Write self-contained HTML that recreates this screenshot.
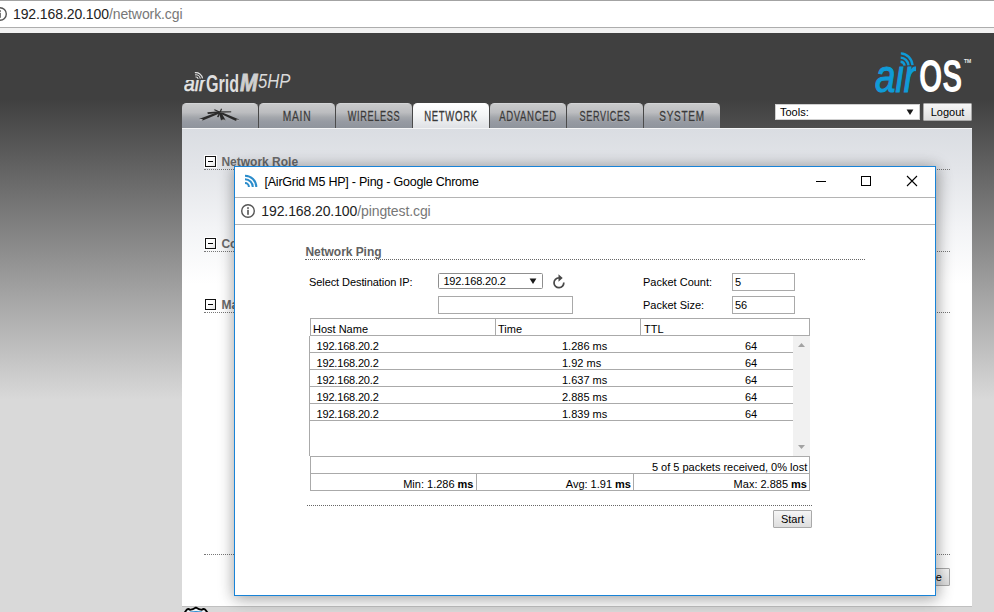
<!DOCTYPE html>
<html><head><meta charset="utf-8"><title>[AirGrid M5 HP] - Network</title>
<style>
*{box-sizing:border-box;margin:0;padding:0}
html,body{width:994px;height:612px;overflow:hidden}
body{position:relative;font-family:"Liberation Sans",Arial,sans-serif;font-size:11px;color:#000;background:#404040}
.abs{position:absolute}
.nw{white-space:nowrap}
#bg{left:0;top:33px;width:994px;height:579px;background:linear-gradient(to bottom,#404040 0px,#404040 67px,#d9d9d9 367px,#d9d9d9 579px)}
#chrome{left:0;top:0;width:994px;height:33px;background:#fff;border-top:1px solid #a3a3a3}
#chrome .ln{left:0;top:26px;width:994px;height:1px;background:#adadad}
#chrome .band{left:0;top:27px;width:994px;height:5px;background:#f2f2f2}
#url{left:13px;top:5px;font-size:14px;line-height:16px;color:#222;letter-spacing:-.1px}
#url span{color:#777}
#panel{left:182px;top:128px;width:790px;height:478px;background:linear-gradient(to bottom,#dadde2 0,#e3e5e9 40px,#f3f4f6 100px,#fff 155px);border-top:1px solid #f4f5f6}
#below{left:0;top:606px;width:994px;height:6px;background:#d9d9d9}
.tab{top:103px;width:76px;height:25px;border-radius:4.5px 4.5px 0 0;background:linear-gradient(to bottom,#c9cacb 0,#bcbdc0 35%,#a4a7ac 55%,#979ba3 72%,#8f949c 100%);border-top:1px solid #d3d4d6;color:#3a3a3a;text-align:center;font-size:13.8px;line-height:25.4px;-webkit-text-stroke:.3px #3a3a3a;text-shadow:0 1px 0 rgba(255,255,255,.3)}
.tab.act{background:linear-gradient(to bottom,#fff 0,#f4f5f6 45%,#dfe1e5 100%);border-color:#fff}
.tab span{position:absolute;left:50%;top:0;white-space:nowrap;transform:translateX(-50%) scaleX(var(--s));transform-origin:50% 50%;letter-spacing:1px;margin-left:.4px}
.sec{left:204px;width:746px;height:15px;border-bottom:1px dotted #777}
.sec i{position:absolute;left:1px;top:1px;width:11px;height:11px;border:1px solid #111;background:linear-gradient(135deg,#fff 40%,#e4e4e4);box-shadow:0 0 0 1px rgba(255,255,255,.9)}
.sec i:after{content:"";position:absolute;left:2px;top:4px;width:5px;height:1px;background:#000}
.sec b{position:absolute;left:17.4px;top:0;font-size:12px;line-height:14px;color:#6a6a6a;white-space:nowrap}
#win{left:234px;top:166px;width:702px;height:430px;background:#fff;border:1px solid #1883d7;box-shadow:0 1px 14px 1px rgba(0,0,0,.28),3px 4px 16px rgba(0,0,0,.13)}
#win .l1{left:0;top:30px;width:700px;height:1px;background:#b4b4b4}
#win .l2{left:0;top:57px;width:700px;height:1px;background:#b4b4b4}
#title{left:29.5px;top:8px;font-size:12.5px;line-height:15px;color:#000;letter-spacing:-.23px}
#wurl{left:26.3px;top:36px;font-size:14px;line-height:16px;color:#222;letter-spacing:-.1px}
#wurl span{color:#777}
.lbl{font-size:11px;line-height:13px;white-space:nowrap}
.inp{background:#fff;border:1px solid #a9a9a9;font-size:11px;line-height:15px;padding-left:2px}
.btn{border:1px solid #a9a9a9;border-radius:1px;background:linear-gradient(to bottom,#f6f6f6,#dedede);font-size:11px;line-height:16px;text-align:center;color:#000}
.hl{background:#aaa;height:1px}
.vl{background:#aaa;width:1px}
.row{left:310px;width:483px;height:17px;border-bottom:1px solid #aaa;font-size:11px;line-height:16px}
.row span{top:2px}
.row .ip{left:6.5px;letter-spacing:-.18px}
.row span{position:absolute;white-space:nowrap}
</style></head><body>
<div id="bg" class="abs"></div>
<div id="chrome" class="abs"><div class="ln abs"></div><div class="band abs"></div>
<div id="url" class="abs nw">192.168.20.100<span>/network.cgi</span></div></div>
<div id="panel" class="abs"></div>
<!-- top-left info icon (cut off) -->
<svg class="abs" style="left:-8px;top:6px" width="16" height="16" viewBox="0 0 16 16"><circle cx="8" cy="8" r="6.3" fill="none" stroke="#555" stroke-width="1.4"/><rect x="7.2" y="6.8" width="1.6" height="5" fill="#555"/><rect x="7.2" y="4.2" width="1.6" height="1.7" fill="#555"/></svg>

<!-- airGrid logo -->
<div class="abs nw" id="lg-air" style="left:183.8px;top:71.4px;font-size:22.5px;line-height:26px;font-style:italic;-webkit-text-stroke:.55px #e6e6e6;color:#e6e6e6;transform-origin:0 0;transform:scaleX(.86);clip-path:inset(8.5px 0 0 0)">air</div>
<svg class="abs" style="left:192px;top:68px" width="14" height="14" viewBox="0 0 14 14"><g fill="none" stroke="#e2e2e2" stroke-width="1.15"><path d="M2.85 4.67A6.8 6.8 0 0 1 10.53 10.45"/><path d="M3.16 6.84A4.6 4.6 0 0 1 8.33 10.60"/><path d="M3.47 9.02A2.4 2.4 0 0 1 6.13 10.82"/></g></svg>
<div class="abs nw" id="lg-grid" style="left:205.5px;top:69.5px;font-size:23.5px;line-height:28px;font-weight:bold;color:#dedede;transform-origin:0 0;transform:scaleX(.685)">Grid</div>
<div class="abs nw" id="lg-m" style="left:239.6px;top:69.4px;font-size:24.5px;line-height:28px;font-style:italic;font-weight:bold;-webkit-text-stroke:.9px #cfcfcf;color:#cfcfcf;transform-origin:0 0;transform:scaleX(.86)">M</div>
<div class="abs nw" id="lg-5hp" style="left:258.3px;top:69px;font-size:19.5px;line-height:24px;font-style:italic;color:#dadada;transform-origin:0 0;transform:scaleX(.855)">5HP</div>

<!-- airOS logo -->
<div class="abs nw" id="os-air" style="left:875px;top:49px;font-size:46px;line-height:54px;font-style:italic;-webkit-text-stroke:1.1px #0f9bd7;color:#0f9bd7;transform-origin:0 0;transform:scaleX(.8);clip-path:inset(17px 0 0 0)">air</div>
<svg class="abs" style="left:895px;top:48px" width="22" height="22" viewBox="0 0 22 22"><g fill="none" stroke="#0f9bd7" stroke-width="2.4"><path d="M5.83 5.41A12.2 13.2 0 0 1 17.53 17.22"/><path d="M5.69 9.61A8.2 9 0 0 1 13.52 17.35"/><path d="M5.55 13.80A4.3 4.8 0 0 1 9.61 17.60"/></g></svg>
<div class="abs nw" id="os-os" style="left:919px;top:50.5px;font-size:45.5px;line-height:52px;font-weight:bold;color:#fff;transform-origin:0 0;transform:scaleX(.658)">OS</div>
<div class="abs nw" style="left:964px;top:58px;font-size:5px;line-height:6px;font-weight:bold;color:#eee">TM</div>



<div id="below" class="abs"></div>
<div class="abs" style="left:182px;top:606px;width:790px;height:1px;background:#c0c0c0"></div>
<!-- bottom-left badge icon -->
<svg class="abs" style="left:182px;top:605.5px" width="30" height="8" viewBox="0 0 30 8"><path d="M1.6 8L5 3.4Q6.5 2.4 8 3.8Q11 3.6 13.9 1.6Q17 3.6 19.8 3.8Q21.5 2.4 23 3.4L26.6 8" fill="#eef4f9" stroke="#000" stroke-width="1.8" stroke-linejoin="round"/><path d="M6.5 8L8 5.6Q14 4.2 20 5.6L21.5 8Z" fill="#2f8fd2"/></svg>
<div class="tab abs" style="left:182px"></div>
<div class="tab abs" style="left:259px"><span style="--s:.741">MAIN</span></div>
<div class="tab abs" style="left:336px"><span style="--s:.662">WIRELESS</span></div>
<div class="tab abs act" style="left:413px"><span style="--s:.69">NETWORK</span></div>
<div class="tab abs" style="left:490px"><span style="--s:.69">ADVANCED</span></div>
<div class="tab abs" style="left:567px"><span style="--s:.657">SERVICES</span></div>
<div class="tab abs" style="left:644px"><span style="--s:.724">SYSTEM</span></div>

<!-- tab logo -->
<svg class="abs" style="left:194px;top:104px" width="52" height="22" viewBox="0 0 52 22"><g fill="#2b2b2b"><polygon points="25,7.6 5,15 8.6,16.6 26.2,9.2"/><polygon points="24.8,8.2 27,16.2 31.6,16.2 27.2,8.2"/><polygon points="26,7.6 45.2,15.4 42,17 25.4,9.2"/><polygon points="25.5,7.3 13.4,8.2 13.8,9.9 25.5,9"/><polygon points="25.5,7.1 37.2,6.9 37.2,8.6 25.5,8.9" fill="#5a5a5a"/><polygon points="25.5,8.8 19.8,6 20.8,5.2 26.2,7.7"/><polygon points="25.4,8.2 27,4.4 28.1,5 26.6,8.6"/><polygon points="25,8.6 23,13 24.6,13.3 26.2,9.2"/></g><ellipse cx="7" cy="15.8" rx="1.8" ry=".7" fill="#b8b9bc"/><ellipse cx="29.4" cy="16" rx="1.9" ry=".6" fill="#b8b9bc"/><ellipse cx="43.4" cy="16.1" rx="1.6" ry=".7" fill="#b8b9bc"/></svg>
<div class="sec abs" style="top:155px"><i></i><b>Network Role</b></div>
<div class="sec abs" style="top:237px"><i></i><b>Configuration Mode</b></div>
<div class="sec abs" style="top:298px"><i></i><b>Management Network Settings</b></div>
<div class="sec abs" style="top:540px;height:15px"></div>
<div class="btn abs" style="left:895px;top:568px;width:55px;height:18px">Change</div>

<div class="abs inp" style="left:775px;top:104px;width:145px;height:16px;border-color:#cfcfcf;font-size:11px;line-height:14px;padding-left:4px">Tools:<svg class="abs" style="left:130px;top:3.5px" width="8" height="7"><polygon points="0.6,0.4 7.4,0.4 4,6" fill="#1a1a1a"/></svg></div>
<div class="btn abs" style="left:923px;top:103px;width:49px;height:18px">Logout</div>

<div id="win" class="abs">

 <svg class="abs" style="left:9px;top:6px" width="15" height="15" viewBox="0 0 15 15"><g fill="none" stroke="#2b8ccb" stroke-width="2"><path d="M1 2.7A11.3 11.3 0 0 1 12.3 14"/><path d="M1 6.2A7.8 7.8 0 0 1 8.8 14"/><path d="M1 10.1A3.9 3.9 0 0 1 4.9 14"/></g></svg>
 <svg class="abs" style="left:5px;top:36px" width="16" height="16" viewBox="0 0 16 16"><circle cx="8" cy="8" r="6.3" fill="none" stroke="#555" stroke-width="1.4"/><rect x="7.2" y="6.8" width="1.6" height="5" fill="#555"/><rect x="7.2" y="4.2" width="1.6" height="1.7" fill="#555"/></svg>
 <div class="abs" style="left:581px;top:14px;width:10px;height:1px;background:#000"></div>
 <div class="abs" style="left:626px;top:9px;width:10px;height:10px;border:1px solid #000"></div>
 <svg class="abs" style="left:671px;top:8px" width="12" height="12" viewBox="0 0 12 12"><path d="M1 1L11 11M11 1L1 11" stroke="#000" stroke-width="1.1" fill="none"/></svg>
 <div id="title" class="abs nw">[AirGrid M5 HP] - Ping - Google Chrome</div>
 <div class="l1 abs"></div>
 <div id="wurl" class="abs nw">192.168.20.100<span>/pingtest.cgi</span></div>
 <div class="l2 abs"></div>
</div>

<!-- popup content, page coordinates -->
<div class="abs nw" style="left:305.4px;top:245px;font-size:12px;line-height:14px;font-weight:bold;color:#616161;letter-spacing:-.05px">Network Ping</div>
<div class="abs" style="left:305px;top:259px;width:560px;height:0;border-top:1px dotted #666"></div>
<div class="abs lbl" style="left:309px;top:276px;letter-spacing:-.08px">Select Destination IP:</div>
<div class="abs inp" style="left:438px;top:273px;width:105px;height:16px;line-height:14px;padding-left:4.4px;border-color:#8f8f8f;border-radius:1.5px;letter-spacing:-.15px">192.168.20.2<svg class="abs" style="left:90px;top:3.6px" width="8" height="7"><polygon points="0.6,0.4 7.4,0.4 4,6" fill="#1a1a1a"/></svg></div>

<svg class="abs" style="left:551px;top:273px" width="16" height="17" viewBox="0 0 16 17"><path d="M7.9 4.9A4.9 4.9 0 1 0 12.8 9.5" fill="none" stroke="#484848" stroke-width="1.7"/><polygon points="7.5,1.3 11.7,5 7.5,8.7" fill="#484848"/></svg>
<div class="abs inp" style="left:438px;top:296px;width:135px;height:18px"></div>
<div class="abs lbl" style="left:643px;top:276px">Packet Count:</div>
<div class="abs inp" style="left:732px;top:273px;width:63px;height:18px;line-height:17.6px">5</div>
<div class="abs lbl" style="left:643px;top:299px">Packet Size:</div>
<div class="abs inp" style="left:732px;top:296px;width:63px;height:18px;line-height:17.6px">56</div>

<!-- header table -->
<div class="abs" style="left:310px;top:318px;width:500px;height:18px;border:1px solid #aaa"></div>
<div class="abs vl" style="left:495px;top:318px;height:18px"></div>
<div class="abs vl" style="left:640px;top:318px;height:18px"></div>
<div class="abs lbl" style="left:313px;top:323px">Host Name</div>
<div class="abs lbl" style="left:498px;top:323px">Time</div>
<div class="abs lbl" style="left:644px;top:323px">TTL</div>
<!-- body -->
<div class="abs vl" style="left:309px;top:336px;height:120px"></div>
<div class="abs" style="left:793px;top:336px;width:17px;height:120px;background:#f1f1f1"></div>
<svg class="abs" style="left:797px;top:342px" width="10" height="6"><polygon points="1,5 8,5 4.5,1" fill="#a3a3a3"/></svg>
<svg class="abs" style="left:797px;top:444px" width="10" height="6"><polygon points="1,1 8,1 4.5,5" fill="#a3a3a3"/></svg>
<div class="row abs" style="top:336px"><span class="ip">192.168.20.2</span><span style="left:252px">1.286 ms</span><span style="left:435px">64</span></div>
<div class="row abs" style="top:353px"><span class="ip">192.168.20.2</span><span style="left:252px">1.92 ms</span><span style="left:435px">64</span></div>
<div class="row abs" style="top:370px"><span class="ip">192.168.20.2</span><span style="left:252px">1.637 ms</span><span style="left:435px">64</span></div>
<div class="row abs" style="top:387px"><span class="ip">192.168.20.2</span><span style="left:252px">2.885 ms</span><span style="left:435px">64</span></div>
<div class="row abs" style="top:404px"><span class="ip">192.168.20.2</span><span style="left:252px">1.839 ms</span><span style="left:435px">64</span></div>
<!-- footer -->
<div class="abs" style="left:310px;top:456px;width:500px;height:35px;border:1px solid #aaa"></div>
<div class="abs hl" style="left:310px;top:473px;width:500px"></div>
<div class="abs vl" style="left:476px;top:473px;height:18px"></div>
<div class="abs vl" style="left:633px;top:473px;height:18px"></div>
<div class="abs lbl" style="right:186.8px;top:461px">5 of 5 packets received, 0% lost</div>
<div class="abs lbl" style="right:520.5px;top:478px">Min: 1.286 <b>ms</b></div>
<div class="abs lbl" style="right:363px;top:478px">Avg: 1.91 <b>ms</b></div>
<div class="abs lbl" style="right:187px;top:478px">Max: 2.885 <b>ms</b></div>
<div class="abs" style="left:307px;top:505px;width:505px;height:0;border-top:1px dotted #666"></div>
<div class="btn abs" style="left:773px;top:510px;width:39px;height:18px">Start</div>
</body></html>
